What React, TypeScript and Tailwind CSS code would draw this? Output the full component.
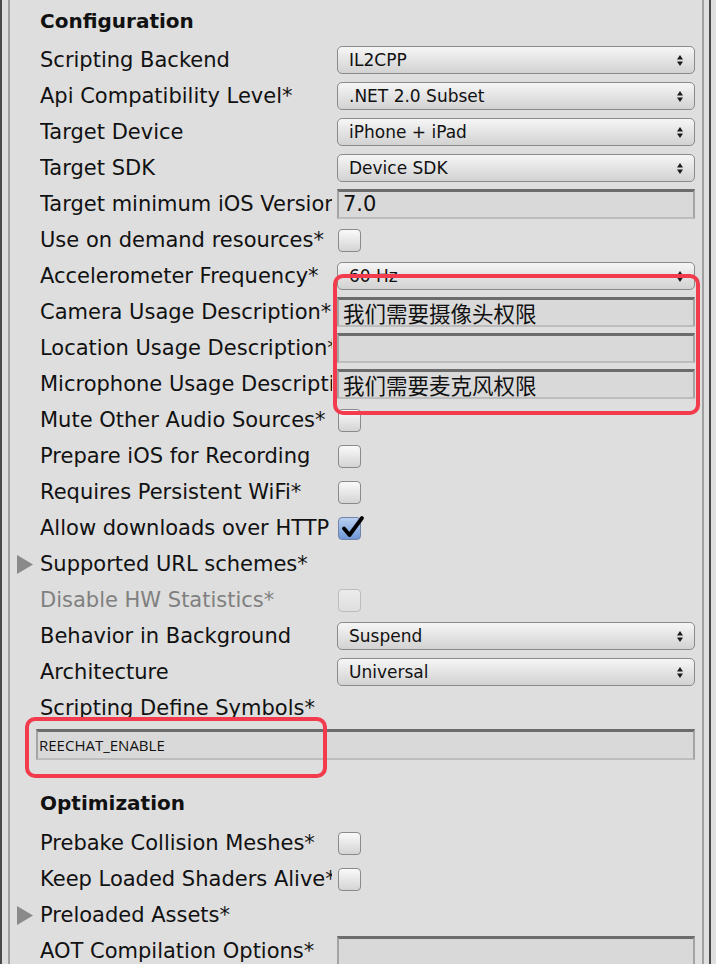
import React from "react";

const LABEL_FONT = { fontFamily: '"DejaVu Sans", "Noto Sans CJK SC", sans-serif' };

function Arrows() {
  return (
    <svg width="6" height="11" viewBox="0 0 6 11" className="shrink-0">
      <polygon points="0,4.5 3,0 6,4.5" fill="#1a1a1a" />
      <polygon points="0,6.5 6,6.5 3,11" fill="#1a1a1a" />
    </svg>
  );
}

function Dropdown({ value }: { value: string }) {
  return (
    <div className="flex h-[28px] w-full items-center justify-between rounded-[5px] border border-[#8a8a8a] bg-gradient-to-b from-[#f6f6f6] to-[#d2d2d2] pl-[11px] pr-[11px] text-[17px] text-[#111]">
      <span className="whitespace-nowrap leading-none">{value}</span>
      <Arrows />
    </div>
  );
}

function TextField({ value, cjk }: { value?: string; cjk?: boolean }) {
  return (
    <div
      className={`flex h-[30px] w-full items-center border-t-[3px] border-t-[#6c6c6c] border-x-2 border-x-[#a4a4a4] border-b-2 border-b-[#bdbdbd] bg-[#d9d9d9] pl-[4px] text-[#111] ${
        cjk ? "text-[21.5px]" : "text-[21px]"
      }`}
      style={cjk ? { fontFamily: '"Noto Sans CJK SC", sans-serif' } : undefined}
    >
      <span className="whitespace-nowrap leading-none">{value}</span>
    </div>
  );
}

function Checkbox({ checked, disabled }: { checked?: boolean; disabled?: boolean }) {
  if (checked) {
    return (
      <div className="relative ml-[1px] h-[23px] w-[23px] rounded-[4px] border border-[#6f84a8] bg-gradient-to-b from-[#b9d0f0] to-[#6e98d6]">
        <svg
          width="24"
          height="24"
          viewBox="0 0 24 24"
          className="absolute left-[2px] top-[-3px]"
        >
          <path d="M3 13.5 L8.5 20 L21 3" fill="none" stroke="#000" strokeWidth="3.8" strokeLinecap="round" strokeLinejoin="round" />
        </svg>
      </div>
    );
  }
  return (
    <div
      className={`ml-[1px] h-[23px] w-[23px] rounded-[4px] border ${
        disabled
          ? "border-[#bcbcbc] bg-gradient-to-b from-[#ececec] to-[#dedede]"
          : "border-[#8a8a8a] bg-gradient-to-b from-[#fafafa] to-[#d4d4d4]"
      }`}
    />
  );
}

function Triangle() {
  return (
    <svg width="16" height="19" viewBox="0 0 16 19" className="shrink-0">
      <polygon points="0,0 16,9.5 0,19" fill="#8a8a8a" />
    </svg>
  );
}

type Row = {
  label: string;
  kind: "dropdown" | "text" | "check" | "fold" | "none";
  value?: string;
  checked?: boolean;
  disabled?: boolean;
  cjk?: boolean;
};

function RowView({ row }: { row: Row }) {
  const labelColor = row.disabled ? "text-[#808080]" : "text-[#111]";
  if (row.kind === "fold") {
    return (
      <div className="flex h-[36px] items-center pl-[7px]">
        <Triangle />
        <div className={`ml-[7px] whitespace-nowrap text-[21px] leading-none ${labelColor}`}>{row.label}</div>
      </div>
    );
  }
  return (
    <div className="flex h-[36px] items-center pl-[30px] pr-[7px]">
      <div className={`w-[292px] shrink-0 overflow-hidden whitespace-nowrap text-[21px] leading-[36px] ${labelColor}`}>
        {row.label}
      </div>
      <div className="ml-[5px] flex flex-1 items-center">
        {row.kind === "dropdown" && <Dropdown value={row.value || ""} />}
        {row.kind === "text" && <TextField value={row.value} cjk={row.cjk} />}
        {row.kind === "check" && <Checkbox checked={row.checked} disabled={row.disabled} />}
      </div>
    </div>
  );
}

const config: Row[] = [
  { label: "Scripting Backend", kind: "dropdown", value: "IL2CPP" },
  { label: "Api Compatibility Level*", kind: "dropdown", value: ".NET 2.0 Subset" },
  { label: "Target Device", kind: "dropdown", value: "iPhone + iPad" },
  { label: "Target SDK", kind: "dropdown", value: "Device SDK" },
  { label: "Target minimum iOS Version", kind: "text", value: "7.0" },
  { label: "Use on demand resources*", kind: "check" },
  { label: "Accelerometer Frequency*", kind: "dropdown", value: "60 Hz" },
  { label: "Camera Usage Description*", kind: "text", value: "我们需要摄像头权限", cjk: true },
  { label: "Location Usage Description*", kind: "text", value: "" },
  { label: "Microphone Usage Description*", kind: "text", value: "我们需要麦克风权限", cjk: true },
  { label: "Mute Other Audio Sources*", kind: "check" },
  { label: "Prepare iOS for Recording", kind: "check" },
  { label: "Requires Persistent WiFi*", kind: "check" },
  { label: "Allow downloads over HTTP (nonsecure)*", kind: "check", checked: true },
  { label: "Supported URL schemes*", kind: "fold" },
  { label: "Disable HW Statistics*", kind: "check", disabled: true },
  { label: "Behavior in Background", kind: "dropdown", value: "Suspend" },
  { label: "Architecture", kind: "dropdown", value: "Universal" },
  { label: "Scripting Define Symbols*", kind: "none" },
];

const optimization: Row[] = [
  { label: "Prebake Collision Meshes*", kind: "check" },
  { label: "Keep Loaded Shaders Alive*", kind: "check" },
  { label: "Preloaded Assets*", kind: "fold" },
  { label: "AOT Compilation Options*", kind: "text", value: "" },
];

export default function App() {
  return (
    <div
      className="relative h-[964px] w-[716px] overflow-hidden bg-[#dedede] border-l-2 border-l-[#4a4a4a] pl-[6px] pr-[5px]"
      style={LABEL_FONT}
    >
      <div className="h-full border-r-2 border-r-[#4a4a4a] pr-[5px]">
        <div className="h-full border-x-2 border-x-[#a0a0a0]">
          <div className="flex h-[42px] items-center pl-[30px] text-[20px] font-bold text-[#111]">
            Configuration
          </div>
          {config.map((r) => (
            <RowView key={r.label} row={r} />
          ))}
          <div className="mt-[3px] pl-[26px] pr-[7px]">
            <div className="flex h-[31px] items-center border-t-[3px] border-t-[#6c6c6c] border-x-2 border-x-[#a4a4a4] border-b-2 border-b-[#bdbdbd] bg-[#d9d9d9] pl-[1px]">
              <span
                className="whitespace-nowrap text-[15px] leading-none text-[#111]"
                style={{ fontFamily: '"Open Sans", sans-serif' }}
              >
                REECHAT_ENABLE
              </span>
            </div>
          </div>
          <div className="mt-[21px] flex h-[44px] items-center pl-[30px] text-[20px] font-bold text-[#111]">
            Optimization
          </div>
          {optimization.map((r) => (
            <RowView key={r.label} row={r} />
          ))}
        </div>
      </div>

      <div className="pointer-events-none absolute left-[331px] top-[274px] h-[141px] w-[367px] rounded-[10px] border-4 border-[#f23b4d]" />
      <div className="pointer-events-none absolute left-[23px] top-[717px] h-[61px] w-[302px] rounded-[10px] border-4 border-[#f23b4d]" />
    </div>
  );
}
